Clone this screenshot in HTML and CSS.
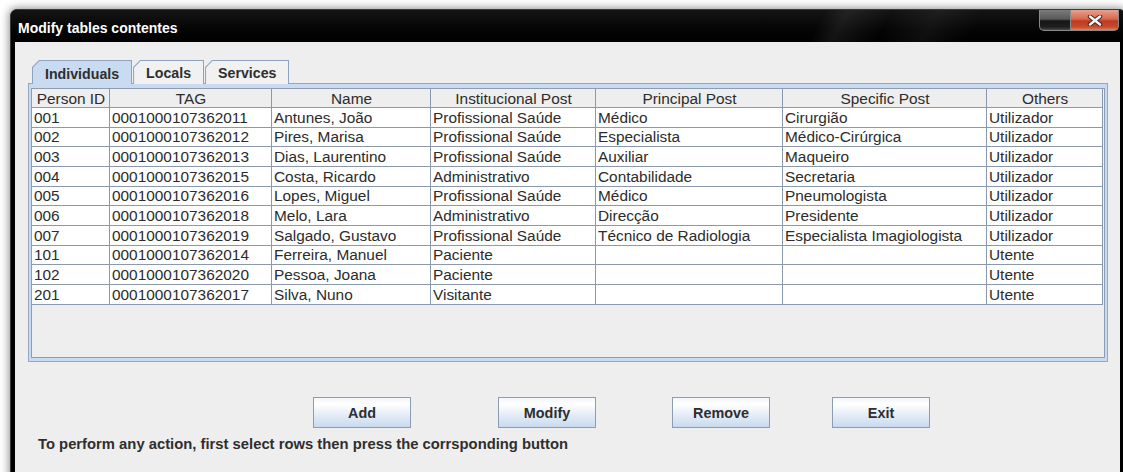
FILE: index.html
```html
<!DOCTYPE html>
<html lang="en">
<head>
<meta charset="utf-8">
<title>Modify tables contentes</title>
<link rel="stylesheet" href="styles.css">
</head>
<body>
<div class="window">
  <div class="titlebar">
    <span class="title">Modify tables contentes</span>
    <div class="caption-buttons">
      <span class="cap cap-min"></span>
      <span class="cap cap-close">
        <svg width="16" height="11" viewBox="0 0 16 11">
          <path d="M3 1.5 L13 9.5 M13 1.5 L3 9.5" stroke="#3a2a28" stroke-width="4.4" stroke-linecap="round"/>
          <path d="M3 1.5 L13 9.5 M13 1.5 L3 9.5" stroke="#f4f4f4" stroke-width="2.4" stroke-linecap="round"/>
        </svg>
      </span>
    </div>
  </div>
  <div class="client">
    <div class="tabpane">
      <div class="tabs">
        <div class="tab tab-selected"><span class="tab-face">Individuals</span></div>
        <div class="tab"><span class="tab-face">Locals</span></div>
        <div class="tab"><span class="tab-face">Services</span></div>
      </div>
      <div class="panel">
        <div class="scroll">
          <table class="grid">
            <colgroup>
              <col class="c-id"><col class="c-tag"><col class="c-name"><col class="c-inst">
              <col class="c-princ"><col class="c-spec"><col class="c-oth">
            </colgroup>
            <thead>
              <tr><th>Person ID</th><th>TAG</th><th>Name</th><th>Institucional Post</th><th>Principal Post</th><th>Specific Post</th><th>Others</th></tr>
            </thead>
            <tbody>
              <tr><td>001</td><td>0001000107362011</td><td>Antunes, João</td><td>Profissional Saúde</td><td>Médico</td><td>Cirurgião</td><td>Utilizador</td></tr>
              <tr><td>002</td><td>0001000107362012</td><td>Pires, Marisa</td><td>Profissional Saúde</td><td>Especialista</td><td>Médico-Cirúrgica</td><td>Utilizador</td></tr>
              <tr><td>003</td><td>0001000107362013</td><td>Dias, Laurentino</td><td>Profissional Saúde</td><td>Auxiliar</td><td>Maqueiro</td><td>Utilizador</td></tr>
              <tr><td>004</td><td>0001000107362015</td><td>Costa, Ricardo</td><td>Administrativo</td><td>Contabilidade</td><td>Secretaria</td><td>Utilizador</td></tr>
              <tr><td>005</td><td>0001000107362016</td><td>Lopes, Miguel</td><td>Profissional Saúde</td><td>Médico</td><td>Pneumologista</td><td>Utilizador</td></tr>
              <tr><td>006</td><td>0001000107362018</td><td>Melo, Lara</td><td>Administrativo</td><td>Direcção</td><td>Presidente</td><td>Utilizador</td></tr>
              <tr><td>007</td><td>0001000107362019</td><td>Salgado, Gustavo</td><td>Profissional Saúde</td><td>Técnico de Radiologia</td><td>Especialista Imagiologista</td><td>Utilizador</td></tr>
              <tr><td>101</td><td>0001000107362014</td><td>Ferreira, Manuel</td><td>Paciente</td><td></td><td></td><td>Utente</td></tr>
              <tr><td>102</td><td>0001000107362020</td><td>Pessoa, Joana</td><td>Paciente</td><td></td><td></td><td>Utente</td></tr>
              <tr><td>201</td><td>0001000107362017</td><td>Silva, Nuno</td><td>Visitante</td><td></td><td></td><td>Utente</td></tr>
            </tbody>
          </table>
        </div>
      </div>
    </div>
    <div class="actions">
      <button class="btn">Add</button>
      <button class="btn btn-modify">Modify</button>
      <button class="btn btn-remove">Remove</button>
      <button class="btn btn-exit">Exit</button>
    </div>
    <p class="hint">To perform any action, first select rows then press the corrsponding button</p>
  </div>
</div>
</body>
</html>
```
FILE: styles.css
```css
html, body {
  margin: 0;
  padding: 0;
}

body {
  width: 1123px;
  height: 472px;
  overflow: hidden;
  background: #ffffff;
  font-family: "Liberation Sans", Arial, sans-serif;
  color: #333333;
}

/* ---- window frame ---- */
.window {
  margin: 9px 0 0 10px;
  width: 1116px;
  height: 480px;
  background: #000000;
  border-radius: 7px 7px 0 0;
  box-shadow: 0 0 9px 1px rgba(0, 0, 0, 0.45);
  border: 1px solid #3a3a3a;
  border-bottom: none;
  box-sizing: border-box;
  display: flex;
  flex-direction: column;
}

.titlebar {
  height: 32px;
  flex: none;
  display: flex;
  align-items: flex-start;
  border-radius: 6px 6px 0 0;
  background:
    linear-gradient(118deg, transparent 0%, transparent 72%, rgba(255,255,255,0.07) 74%, transparent 78%, rgba(255,255,255,0.05) 82%, transparent 86%),
    linear-gradient(to bottom, #141414 0%, #050505 60%, #000000 100%);
}

.title {
  padding: 10px 0 0 7px;
  font-weight: bold;
  font-size: 14px;
  color: #ffffff;
}

.caption-buttons {
  margin-left: auto;
  margin-right: 6px;
  display: flex;
}

.cap {
  height: 21px;
  box-sizing: border-box;
  border: 1px solid #8a8a8a;
  border-top: none;
  display: flex;
  align-items: center;
  justify-content: center;
}

.cap-min {
  width: 32px;
  border-radius: 0 0 0 5px;
  background: linear-gradient(to bottom, #7a7a7a 0%, #5a5a5a 45%, #151515 55%, #1e1e1e 85%, #4a4a4a 100%);
}

.cap-close {
  width: 48px;
  border-left: none;
  border-radius: 0 0 5px 0;
  background: linear-gradient(to bottom, #e8a090 0%, #d86850 45%, #c03a20 55%, #c84a2c 85%, #e08060 100%);
}

/* ---- client area ---- */
.client {
  flex: 1;
  margin: 0 5px 0 4px;
  background: #eeeeee;
  padding-top: 18px;
}

.tabpane {
  margin-left: 13px;
  width: 1080px;
}

.tabs {
  display: flex;
  padding-left: 4px;
  height: 23px;
}

.tab {
  height: 24px;
  margin-right: 1px;
  padding: 1px 1px 0 1px;
  box-sizing: border-box;
  background: #8ea3bf;
  clip-path: polygon(7px 0, 100% 0, 100% 100%, 0 100%, 0 7px);
}

.tab-face {
  display: flex;
  align-items: center;
  height: 100%;
  padding: 0 12px 0 12px;
  background: #f1f1f1;
  clip-path: polygon(6.5px 0, 100% 0, 100% 100%, 0 100%, 0 6.5px);
  font-weight: bold;
  font-size: 14.2px;
  color: #2e2e2e;
}

.tab-selected {
  position: relative;
  z-index: 1;
}

.tab-selected .tab-face {
  background: #c8dbf1;
  height: calc(100% + 2px);
}

.panel {
  border: 1px solid #93a7c2;
  background: #c8dbf1;
  padding: 4px 2px 3px 2px;
  height: 279px;
  box-sizing: border-box;
}

.scroll {
  height: 100%;
  box-sizing: border-box;
  border: 1px solid #8d9cb0;
  background: #eeeeee;
  overflow: hidden;
}

/* ---- table ---- */
.grid {
  table-layout: fixed;
  width: 1071px;
  border-collapse: separate;
  border-spacing: 0;
  font-size: 15.4px;
  color: #2c2c2c;
}

.c-id { width: 78px; }
.c-tag { width: 162px; }
.c-name { width: 159px; }
.c-inst { width: 165px; }
.c-princ { width: 187px; }
.c-spec { width: 204px; }
.c-oth { width: 116px; }

.grid th,
.grid td {
  border-right: 1px solid #8a99ae;
  border-bottom: 1px solid #8a99ae;
  padding: 0 1px 0 2px;
  line-height: 17px;
  white-space: nowrap;
  overflow: hidden;
}

.grid th {
  height: 18px;
  font-weight: normal;
  text-align: center;
  background: #eeeeee;
}

.grid tbody tr {
  height: 19.67px;
}

.grid td {
  background: #ffffff;
  text-align: left;
}

/* ---- buttons and hint ---- */
.actions {
  display: flex;
  margin-top: 35px;
  padding-left: 298px;
}

.btn {
  width: 98px;
  height: 31px;
  border: 1px solid #8c9db3;
  border-radius: 0;
  background: linear-gradient(to bottom, #f2f6fb 0%, #ffffff 22%, #e6eef8 55%, #c9daee 100%);
  font-family: "Liberation Sans", Arial, sans-serif;
  font-weight: bold;
  font-size: 14.4px;
  color: #2e2e2e;
  padding: 0;
}

.btn-modify { margin-left: 87px; }
.btn-remove { margin-left: 76px; }
.btn-exit { margin-left: 62px; }

.hint {
  margin: 8px 0 0 23px;
  font-weight: bold;
  font-size: 14.8px;
  line-height: 17px;
  color: #2e2e2e;
}
```
